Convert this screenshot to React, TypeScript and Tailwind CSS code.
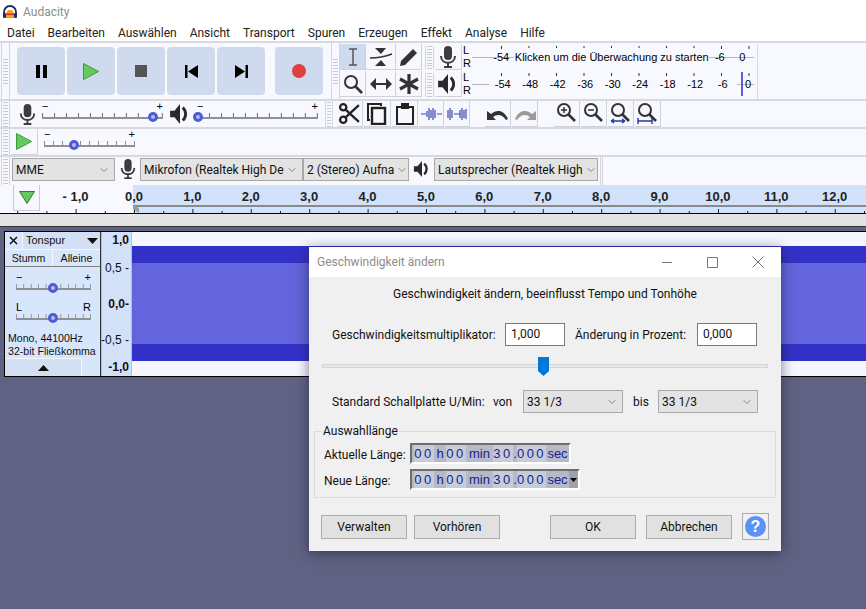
import { ReactNode } from "react";
import { ChevronDown } from "lucide-react";

const seg = "font-['Roboto','Noto_Sans',sans-serif]";
const arial = "font-['Liberation_Sans',Arial,sans-serif]";

const menus = ["Datei", "Bearbeiten", "Auswählen", "Ansicht", "Transport", "Spuren", "Erzeugen", "Effekt", "Analyse", "Hilfe"];
const rulerLabels = ["- 1,0", "0,0", "1,0", "2,0", "3,0", "4,0", "5,0", "6,0", "7,0", "8,0", "9,0", "10,0", "11,0", "12,0"];
const meterLabels = ["-54", "-48", "-42", "-36", "-30", "-24", "-18", "-12", "-6"];

const Grip = ({ className = "" }: { className?: string }) => (
  <div className={"flex flex-col justify-center gap-[2px] border-x border-[#d4d6dc] self-stretch " + className}>
    {Array.from({ length: 9 }, (_, i) => (
      <div key={i} className="h-px bg-[#c8cad0] mx-[1px]" />
    ))}
  </div>
);

const Sep = () => <div className="w-full h-[2px] bg-[#d8d9de]" />;

const Transport = ({ children, className = "" }: { children: ReactNode; className?: string }) => (
  <div className={"w-12 h-12 rounded-[4px] bg-[#cfdaee] flex items-center justify-center " + className}>{children}</div>
);

const ToolBtn = ({ children, active, className = "" }: { children: ReactNode; active?: boolean; className?: string }) => (
  <div
    className={
      "flex items-center justify-center shrink-0 border-r border-b border-[#cfd2dc] " +
      (active ? "bg-[#cfdaee] " : "bg-[#f6f8fe] ") +
      className
    }
  >
    {children}
  </div>
);

const MicIcon = ({ size = 22 }: { size?: number }) => (
  <svg width={size} height={size} viewBox="0 0 22 22">
    <rect x="7" y="0" width="8" height="14" rx="4" fill="#3c3c3c" />
    <path d="M4 10c0 9 14 9 14 0M11 16v4M7 21h8" fill="none" stroke="#3c3c3c" strokeWidth="2" />
  </svg>
);

const SpeakerIcon = ({ size = 20 }: { size?: number }) => (
  <svg width={size} height={size} viewBox="0 0 20 20">
    <path d="M1 7h4l5-6v18l-5-6H1z" fill="#2a2a2a" />
    <path d="M12.500 4c3.500 3.500 3.500 8.500 0 12" fill="none" stroke="#2a2a2a" strokeWidth="2.600" />
  </svg>
);

const Slider = ({ className, thumb, labels = ["−", "+"] }: { className: string; thumb: string; labels?: string[] }) => (
  <div className={"relative h-[22px] " + className}>
    <div className={"flex justify-between text-[11px] leading-[11px] text-black " + arial}>
      <span>{labels[0]}</span>
      <span>{labels[1]}</span>
    </div>
    <svg className="w-full h-[4px] mt-[1px] block" preserveAspectRatio="none" viewBox="0 0 100 4">
      {Array.from({ length: 11 }, (_, i) => (
        <rect key={i} x={i * 9.9} y="0" width="0.9" height="4" fill="#777" />
      ))}
    </svg>
    <div className="h-[2px] w-full bg-[#8f9095]" />
    <div className={"absolute top-[11px] w-[10px] h-[10px] rounded-full border-[3px] border-[#4f5bd5] bg-[#b9bdf0] " + thumb} />
  </div>
);

const Combo = ({ label, className = "" }: { label: string; className?: string }) => (
  <div className={"h-[23px] shrink-0 border border-[#a8a8a8] bg-[#e3e3e3] flex items-center pl-[3px] pr-[4px] " + className}>
    <span className={"flex-1 whitespace-nowrap text-[12px] text-[#111] " + seg}>{label}</span>
    <ChevronDown size={12} strokeWidth={1.2} color="#444" className="shrink-0 ml-[2px]" />
  </div>
);

const DlgBtn = ({ label, className = "" }: { label: string; className?: string }) => (
  <div className={"w-[86px] h-[24px] border border-[#adadad] bg-[#e1e1e1] flex items-center justify-center text-[12px] text-[#111] " + className}>
    {label}
  </div>
);

const Digits = ({ text, w }: { text: string; w: string }) => (
  <span className={"h-full flex items-center justify-center tracking-[2.5px] bg-[#c6ccd8] " + w}>{text}</span>
);

const Unit = ({ text, w }: { text: string; w: string }) => <span className={"h-full flex items-center justify-center " + w}>{text}</span>;

const Numeric = ({ arrow }: { arrow?: boolean }) => (
  <div className={"flex h-[21px] pl-[2px] border-2 border-t-[#6e6e6e] border-l-[#6e6e6e] border-r-white border-b-white bg-[#b4bac8] text-[13px] text-[#1b1b92] " + arial}>
    <Digits text="00" w="w-[20px]" />
    <Unit text="h" w="w-[12px]" />
    <Digits text="00" w="w-[20px]" />
    <Unit text="min" w="w-[27px]" />
    <Digits text="30" w="w-[20px]" />
    <Unit text="." w="w-[4px]" />
    <Digits text="000" w="w-[29px]" />
    <Unit text="sec" w="w-[23px]" />
    {arrow && (
      <div className="w-[9px] h-full bg-[#9da2ac] flex items-center justify-center">
        <svg width="7" height="4" viewBox="0 0 7 4">
          <path d="M0 0h7L3.500 4z" fill="#000" />
        </svg>
      </div>
    )}
  </div>
);

const Dialog = () => (
  <div className={"absolute left-[309px] top-[247px] w-[472px] h-[304px] bg-[#f0f0f0] shadow-[0_2px_12px_rgba(20,20,40,0.55)] text-[#111] " + seg}>
    <div className="h-[30px] bg-white flex items-center pl-[8px]">
      <span className="flex-1 text-[12px] text-[#8c8c8c]">Geschwindigkeit ändern</span>
      <svg width="102" height="12" viewBox="0 0 102 12" className="mr-[17px]" fill="none" stroke="#777">
        <path d="M0 6.500h10M45.500 1.500h10v10h-10zM90.500 0.500l11 11M101.500 0.500l-11 11" />
      </svg>
    </div>
    <p className="text-[12px] text-center leading-[17px] mt-[9px]">Geschwindigkeit ändern, beeinflusst Tempo und Tonhöhe</p>
    <div className="flex items-center h-[23px] mt-[20px] pl-[23px] text-[12px]">
      <span className="w-[173px] whitespace-nowrap">Geschwindigkeitsmultiplikator:</span>
      <div className="w-[60px] h-[23px] border border-[#7a7a7a] bg-white pl-[5px] leading-[21px]">1,000</div>
      <span className="w-[132px] pl-[10px] whitespace-nowrap">Änderung in Prozent:</span>
      <div className="w-[60px] h-[23px] border border-[#7a7a7a] bg-white pl-[5px] leading-[21px]">0,000</div>
    </div>
    <div className="relative h-[4px] mx-[13px] mt-[18px] bg-[#e7e7e7] border border-[#d6d6d6]">
      <svg className="absolute left-[215px] top-[-8px]" width="11" height="19" viewBox="0 0 11 19">
        <path d="M0 0h11v14l-5.500 5L0 14z" fill="#0078d7" />
      </svg>
    </div>
    <div className="flex items-center h-[23px] mt-[22px] pl-[23px] text-[12px]">
      <span className="w-[161px] whitespace-nowrap">Standard Schallplatte U/Min:</span>
      <span className="w-[30px]">von</span>
      <Combo label="33 1/3" className="w-[100px]" />
      <span className="w-[35px] pl-[10px]">bis</span>
      <Combo label="33 1/3" className="w-[100px]" />
    </div>
    <fieldset className="mx-[5px] mt-[11px] h-[74px] border border-[#dcdcdc] pl-[9px]">
      <legend className="text-[12px] leading-[14px] -ml-[2px] px-px">Auswahllänge</legend>
      <div className="flex items-center mt-[5px] text-[12px]">
        <span className="w-[86px] whitespace-nowrap pt-[3px]">Aktuelle Länge:</span>
        <Numeric />
      </div>
      <div className="flex items-center mt-[5px] text-[12px]">
        <span className="w-[86px] whitespace-nowrap pt-[3px]">Neue Länge:</span>
        <Numeric arrow />
      </div>
    </fieldset>
    <div className="flex items-center mt-[15px] pl-[12px]">
      <DlgBtn label="Verwalten" />
      <DlgBtn label="Vorhören" className="ml-[7px]" />
      <DlgBtn label="OK" className="ml-[50px]" />
      <DlgBtn label="Abbrechen" className="ml-[10px]" />
      <div className="ml-[10px] w-[27px] h-[27px] border border-[#adadad] flex items-center justify-center">
        <div className={"w-[21px] h-[21px] rounded-full bg-[#5b93f5] text-white text-[16px] font-bold flex items-center justify-center " + arial}>?</div>
      </div>
    </div>
  </div>
);

const ZoomGlass = ({ children }: { children: ReactNode }) => (
  <svg width="22" height="23" viewBox="0 0 22 23" fill="none">
    <circle cx="8" cy="8" r="6" stroke="#333" strokeWidth="2" />
    <path d="M12.500 12.500L19 19" stroke="#333" strokeWidth="2.600" />
    {children}
  </svg>
);

function MeterRow({ icon, top, tools }: { icon: ReactNode; top?: boolean; tools: ReactNode }) {
  return (
    <div className={"flex h-[28px] " + (top ? "pt-[1px]" : "")}>
      <div className="flex w-[82px] shrink-0">{tools}</div>
      <Grip className="w-[9px] ml-[3px] my-[2px]" />
      <div className="w-[27px] h-[26px] ml-[1px] border-r border-b border-[#cfd2dc] flex items-center justify-center">{icon}</div>
      <div className={"w-[10px] text-[11px] leading-[13px] pl-[1px] text-black " + arial}>
        L
        <br />R
      </div>
      <div className={"relative w-[282px] flex pl-[17px] text-[11px] text-black " + arial}>
        <svg className="absolute inset-0" width="282" height="27">
          <path d="M0 13.500H282" stroke="#b8b8b8" />
          {Array.from({ length: 11 }, (_, i) => (
            <rect key={i} x={29 + i * 27.5} y="2" width="1" height="3" fill="#333" />
          ))}
        </svg>
        {top ? (
          <div className="relative flex items-center w-full h-[27px]">
            <span className="w-[25px] text-center">-54</span>
            <span className="h-[19px] bg-[#f8f9ff] w-[199px] text-center leading-[19px] ml-[1px] whitespace-nowrap">Klicken um die Überwachung zu starten</span>
            <span className="w-[22px] text-center">-6</span>
            <span className="w-[24px] text-center">0</span>
          </div>
        ) : (
          <div className="relative flex items-center h-[27px]">
            {meterLabels.map((m) => (
              <span key={m} className="w-[27.5px] text-center bg-[#f8f9ff] leading-[13px]">
                {m}
              </span>
            ))}
            <span className="w-[23px] text-center">0</span>
          </div>
        )}
        {!top && <div className="absolute left-[269px] top-[1px] w-[2px] h-[24px] bg-[#5a5ee0]" />}
      </div>
      <div className="flex-1 border-l border-[#d8d9de] ml-[3px]" />
    </div>
  );
}

function Ruler() {
  return (
    <div className="relative h-[29px] bg-[#f8f9ff] border-b border-black">
      <div className="absolute left-[133px] right-0 top-0 bottom-0 bg-[#d2e2fa]" />
      <div className="relative flex h-[20px] items-end pl-[46.4px] text-[13px] font-bold text-[#222]">
        {rulerLabels.map((r) => (
          <span key={r} className={"w-[58.4px] shrink-0 text-center leading-[16px] " + arial}>
            {r}
          </span>
        ))}
      </div>
      <svg className="relative block" width="866" height="8">
        <path d="M133 1H866" stroke="#8a8a8a" strokeWidth="2" />
        {Array.from({ length: 15 }, (_, i) => (
          <g key={i}>
            <rect x={17.200 + i * 58.4} y="4" width="1" height="4" fill="#222" />
            <rect x={46.400 + i * 58.4} y="6" width="1" height="2" fill="#222" />
          </g>
        ))}
        <path d="M133 0l6 3v5l-6-4z" fill="#9a9a9a" />
      </svg>
      <div className="absolute left-[13px] top-0 w-[27px] h-[26px] border-x border-b border-[#c9ccd6] bg-[#f6f8fe] flex items-center justify-center">
        <svg width="16" height="13" viewBox="0 0 16 13">
          <path d="M0.500 0.500h15L8 12.500z" fill="#66c95f" stroke="#2f7a30" />
        </svg>
      </div>
    </div>
  );
}

function TrackPanel() {
  return (
    <div className={"w-[96px] bg-[#d8e6fb] flex flex-col text-[10.6px] text-[#111] border-r border-[#333] " + arial}>
      <div className="flex h-[18px] border-b border-[#f4f6fb]">
        <div className="w-[18px] flex items-center justify-center border-r border-[#f4f6fb]">
          <svg width="9" height="9" viewBox="0 0 9 9" stroke="#111" strokeWidth="1.500">
            <path d="M1 1l7 7M8 1L1 8" />
          </svg>
        </div>
        <div className="flex-1 flex items-center pl-[3px] bg-[#d3dff2]">
          <span className="flex-1 text-[11px]">Tonspur</span>
          <svg className="mr-[2px]" width="11" height="6" viewBox="0 0 11 6">
            <path d="M0 0h11L5.500 6z" fill="#111" />
          </svg>
        </div>
      </div>
      <div className="flex h-[17px] border-b border-[#808080]">
        <div className="w-[48px] flex items-center justify-center border-r border-[#f4f6fb] pt-[1px]">Stumm</div>
        <div className="flex-1 flex items-center justify-center pt-[1px]">Alleine</div>
      </div>
      <Slider className="w-[75px] ml-[11px] mt-[5px]" thumb="left-[32px]" />
      <Slider className="w-[75px] ml-[11px] mt-[8px]" thumb="left-[32px]" labels={["L", "R"]} />
      <div className="pl-[3px] leading-[12.5px] mt-[8px] whitespace-nowrap">
        Mono, 44100Hz
        <br />
        32-bit Fließkomma
      </div>
      <div className="mt-auto w-[77px] h-[18px] bg-[#d3dff2] border-t border-r border-[#f4f6fb] flex items-center justify-center">
        <svg width="11" height="6" viewBox="0 0 11 6">
          <path d="M0 6h11L5.500 0z" fill="#111" />
        </svg>
      </div>
    </div>
  );
}

export default function App() {
  return (
    <div className={"relative w-[866px] h-[609px] overflow-hidden bg-[#5f6283] " + seg}>
      {/* title + menu */}
      <div className="h-[24px] bg-white flex items-center pl-[3px]">
        <svg width="14" height="14" viewBox="0 0 14 14">
          <path d="M1 9V7a6 6 0 0 1 12 0v2" fill="none" stroke="#1b2a6b" strokeWidth="1.800" />
          <rect x="0" y="8" width="3" height="5" rx="1" fill="#1b2a6b" />
          <rect x="11" y="8" width="3" height="5" rx="1" fill="#1b2a6b" />
          <path d="M3 13V8l2-3h4l2 3v5z" fill="#f2a51c" />
          <rect x="3" y="8.500" width="8" height="1.600" fill="#d6342a" />
        </svg>
        <span className="ml-[6px] text-[12px] text-[#8c8c8c]">Audacity</span>
      </div>
      <div className="h-[17px] bg-white flex items-center pl-[7px] gap-[13px] text-[12px] text-[#222]">
        {menus.map((m) => (
          <span key={m}>{m}</span>
        ))}
      </div>
      <div className="bg-[#f8f9ff]">
        <Sep />
        {/* transport, tools, meters */}
        <div className="flex h-[56px]">
          <Grip className="w-[9px] ml-[1px]" />
          <div className="flex items-center pl-[7px] gap-[2px] w-[317px]">
            <Transport>
              <div className="flex gap-[3px]">
                <div className="w-[4px] h-[13px] bg-black" />
                <div className="w-[4px] h-[13px] bg-black" />
              </div>
            </Transport>
            <Transport>
              <svg width="16" height="17" viewBox="0 0 16 17">
                <path d="M0.500 0.500L15.500 8.500L0.500 16.500z" fill="#66c95f" stroke="#3f9a3c" />
              </svg>
            </Transport>
            <Transport>
              <div className="w-[12px] h-[12px] bg-[#555]" />
            </Transport>
            <Transport>
              <svg width="13" height="13" viewBox="0 0 13 13">
                <path d="M0 0h2.500v13H0zM13 0v13L3 6.500z" fill="#000" />
              </svg>
            </Transport>
            <Transport>
              <svg width="13" height="13" viewBox="0 0 13 13">
                <path d="M13 0h-2.500v13H13zM0 0v13l10-6.500z" fill="#000" />
              </svg>
            </Transport>
            <Transport className="ml-[8px]">
              <div className="w-[14px] h-[14px] rounded-full bg-[#e0403f]" />
            </Transport>
          </div>
          <Grip className="w-[9px] ml-[4px]" />
          <div className="flex-1 flex flex-col">
            <MeterRow
              top
              icon={<MicIcon size={22} />}
              tools={
                <>
                  <ToolBtn active className="w-[26px] h-[26px]">
                    <svg width="14" height="18" viewBox="0 0 14 18">
                      <path d="M3 1h8M3 17h8M7 1v16" stroke="#555" strokeWidth="1.500" fill="none" />
                    </svg>
                  </ToolBtn>
                  <ToolBtn className="w-[30px] h-[26px]">
                    <svg width="24" height="20" viewBox="0 0 24 20">
                      <path d="M6 1h11l-5 6zM6 19h11l-5-6z" fill="#333" />
                      <path d="M1 11c8 0 14-1 22-4" stroke="#333" strokeWidth="1.600" fill="none" />
                    </svg>
                  </ToolBtn>
                  <ToolBtn className="w-[26px] h-[26px]">
                    <svg width="20" height="20" viewBox="0 0 20 20">
                      <path d="M1 19l1-5L14 2l4 4L6 18z" fill="#333" />
                    </svg>
                  </ToolBtn>
                </>
              }
            />
            <MeterRow
              icon={<SpeakerIcon size={22} />}
              tools={
                <>
                  <ToolBtn className="w-[26px] h-[26px]">
                    <svg width="20" height="20" viewBox="0 0 20 20" fill="none" stroke="#333">
                      <circle cx="8" cy="8" r="6" strokeWidth="2" />
                      <path d="M12.500 12.500L19 19" strokeWidth="2.600" />
                    </svg>
                  </ToolBtn>
                  <ToolBtn className="w-[30px] h-[26px]">
                    <svg width="22" height="12" viewBox="0 0 22 12">
                      <path d="M6 0v12L0 6zM16 0v12l6-6z" fill="#333" />
                      <path d="M5 6h12" stroke="#333" strokeWidth="2" />
                    </svg>
                  </ToolBtn>
                  <ToolBtn className="w-[26px] h-[26px]">
                    <svg width="22" height="22" viewBox="0 0 22 22" stroke="#333" strokeWidth="3.200">
                      <path d="M11 1v20M2 6l18 10M20 6L2 16" />
                    </svg>
                  </ToolBtn>
                </>
              }
            />
          </div>
        </div>
        <Sep />
        {/* mixer + edit */}
        <div className="flex h-[26px]">
          <Grip className="w-[9px] ml-[1px]" />
          <div className="w-[27px] flex items-center justify-center ml-[4px]">
            <MicIcon size={21} />
          </div>
          <Slider className="w-[121px] ml-[1px]" thumb="right-[5px]" />
          <div className="w-[34px] flex items-center justify-center">
            <SpeakerIcon size={22} />
          </div>
          <Slider className="w-[121px]" thumb="left-[-4px]" />
          <Grip className="w-[8px] ml-[7px]" />
          <div className="flex ml-[4px] gap-[1px]">
            <ToolBtn className="w-[26px] h-[26px]">
              <svg width="23" height="23" viewBox="0 0 22 22" fill="none" stroke="#222" strokeWidth="2.200">
                <circle cx="5" cy="17" r="3" />
                <circle cx="5" cy="5" r="3" />
                <path d="M7 7l13 12M7 15L20 3" />
              </svg>
            </ToolBtn>
            <ToolBtn className="w-[27px] h-[26px]">
              <svg width="20" height="22" viewBox="0 0 20 22" fill="none" stroke="#222" strokeWidth="2">
                <path d="M3 17H1V1h13v2" />
                <rect x="5" y="5" width="13" height="16" strokeWidth="2.400" />
              </svg>
            </ToolBtn>
            <ToolBtn className="w-[26px] h-[26px]">
              <svg width="18" height="22" viewBox="0 0 18 22" fill="none" stroke="#222" strokeWidth="2">
                <rect x="1" y="4" width="16" height="17" />
                <rect x="6" y="1" width="6" height="4" fill="#222" />
              </svg>
            </ToolBtn>
            <ToolBtn className="w-[25px] h-[26px]">
              <svg width="21" height="14" viewBox="0 0 21 14" stroke="#3a48ad" strokeWidth="1.200">
                <path d="M0 7h5M16 7h5M6 4v6M8 1v12M10 3v8M12 1v12M14 3v8" />
              </svg>
            </ToolBtn>
            <ToolBtn className="w-[25px] h-[26px]">
              <svg width="21" height="14" viewBox="0 0 21 14" stroke="#3a48ad" strokeWidth="1.200">
                <path d="M1 3v8M3 1v12M5 3v8M7 7h6M13 3v8M15 1v12M17 3v8M19 2v10" />
              </svg>
            </ToolBtn>
            <ToolBtn className="w-[26px] h-[26px] ml-[14px]">
              <svg width="22" height="14" viewBox="0 0 22 14">
                <path d="M0 4v9h9L6 10c4-3 9-3 13 3l2-1C17 3 10 2 4 7z" fill="#333" />
              </svg>
            </ToolBtn>
            <ToolBtn className="w-[26px] h-[26px]">
              <svg width="22" height="14" viewBox="0 0 22 14">
                <path d="M22 4v9h-9l3-3c-4-3-9-3-13 3L1 12C5 3 12 2 18 7z" fill="#9a9a9a" />
              </svg>
            </ToolBtn>
            <ToolBtn className="w-[26px] h-[26px] ml-[15px]">
              <ZoomGlass>
                <path d="M5 8h6M8 5v6" stroke="#333" strokeWidth="1.500" />
              </ZoomGlass>
            </ToolBtn>
            <ToolBtn className="w-[26px] h-[26px]">
              <ZoomGlass>
                <path d="M5 8h6" stroke="#333" strokeWidth="1.500" />
              </ZoomGlass>
            </ToolBtn>
            <ToolBtn className="w-[26px] h-[26px]">
              <ZoomGlass>
                <path d="M1 19h14M1 19l3-2M1 19l3 2M15 19l-3-2M15 19l-3 2" stroke="#2234a8" strokeWidth="1.400" />
              </ZoomGlass>
            </ToolBtn>
            <ToolBtn className="w-[26px] h-[26px]">
              <ZoomGlass>
                <path d="M1 16v6M15 16v6M1 19h14" stroke="#2234a8" strokeWidth="1.400" />
              </ZoomGlass>
            </ToolBtn>
          </div>
        </div>
        <Sep />
        {/* play at speed */}
        <div className="flex h-[26px]">
          <Grip className="w-[9px] ml-[1px]" />
          <ToolBtn className="w-[27px] h-[26px] ml-[1px]">
            <svg width="16" height="17" viewBox="0 0 16 17">
              <path d="M0.500 0.500L15.500 8.500L0.500 16.500z" fill="#66c95f" stroke="#3f9a3c" />
            </svg>
          </ToolBtn>
          <Slider className="w-[91px] ml-[6px]" thumb="left-[25px]" />
        </div>
        <Sep />
        {/* devices */}
        <div className="flex h-[28px] items-start">
          <Grip className="w-[9px] ml-[1px]" />
          <Combo label="MME" className="w-[103px] ml-[2px] mt-[1px]" />
          <div className="w-[25px] flex justify-center mt-[2px]">
            <MicIcon size={20} />
          </div>
          <Combo label="Mikrofon (Realtek High De" className="w-[163px] mt-[1px]" />
          <Combo label="2 (Stereo) Aufna" className="w-[106px] mt-[1px]" />
          <div className="w-[25px] flex justify-center mt-[3px]">
            <SpeakerIcon size={18} />
          </div>
          <Combo label="Lautsprecher (Realtek High" className="w-[164px] mt-[1px]" />
          <div className="ml-[2px] w-[3px] self-stretch border-x border-[#d4d6dc]" />
        </div>
      </div>
      <Ruler />
      <div className="h-[13px] bg-[#e3e3e3] border-b border-[#333]" />
      {/* track */}
      <div className="flex mt-[4px] ml-[4px] h-[146px] border-y border-l border-black">
        <TrackPanel />
        <div className={"w-[31px] bg-[#d3e1f8] border-x border-[#b8bccb] flex flex-col items-end pr-[2px] text-[12px] text-[#111] whitespace-nowrap " + arial}>
          <b className="leading-[14px] mt-[1px]">1,0</b>
          <span className="leading-[14px] mt-[14px]">0,5 -</span>
          <b className="leading-[14px] mt-[22px]">0,0-</b>
          <span className="leading-[14px] mt-[22px]">-0,5 -</span>
          <b className="leading-[14px] mt-[13px]">-1,0</b>
        </div>
        <div className="flex-1 flex flex-col bg-[#f4f7ff]">
          <div className="h-[14px]" />
          <div className="h-[17px] bg-[#3232c8]" />
          <div className="h-[81px] bg-[#6464dc]" />
          <div className="h-[17px] bg-[#3232c8]" />
        </div>
      </div>
      <Dialog />
    </div>
  );
}
